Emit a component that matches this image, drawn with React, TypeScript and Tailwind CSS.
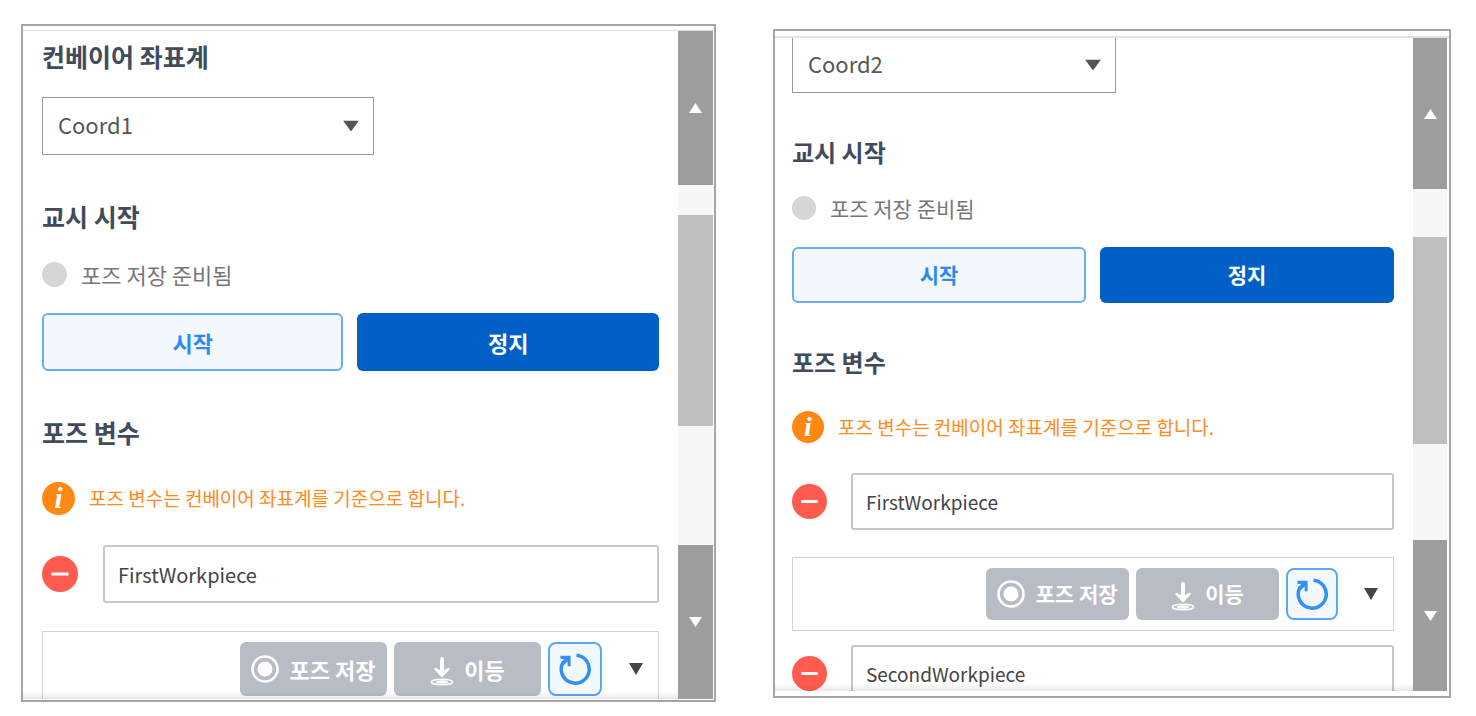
import { useState } from "react";
import type { ReactNode } from "react";

type Size = "lg" | "md";

// the two panels show the same page, at two zoom levels
const styles = {
  lg: {
    heading: "text-[25px]",
    select: "h-[58px] w-[332px] text-[22px]",
    section: "mt-[45px]",
    status: "mt-[26px] gap-[14px] text-[22px]",
    dot: "size-[25px]",
    buttons: "mt-[23px]",
    button: "h-[58px] text-[22px]",
    info: "mt-[34px] gap-[14px] text-[19px]",
    infoIcon: "size-[33px] text-[29px]",
    row: "gap-[25px]",
    remove: "size-[36px]",
    input: "h-[58px] text-[20px]",
    box: "mt-[28px]",
    action: "h-[54px] w-[147px] text-[22px]",
    reset: "size-[54px]",
    toggle: "ml-[20px]",
  },
  md: {
    heading: "text-[24px]",
    select: "h-[57px] w-[324px] text-[22px]",
    section: "mt-[43px]",
    status: "mt-[24px] gap-[14px] text-[21px]",
    dot: "size-[24px]",
    buttons: "mt-[23px]",
    button: "h-[56px] text-[21px]",
    info: "mt-[33px] gap-[14px] text-[19px]",
    infoIcon: "size-[32px] text-[28px]",
    row: "gap-[24px]",
    remove: "size-[35px]",
    input: "h-[57px] text-[19px]",
    box: "mt-[27px]",
    action: "h-[52px] w-[143px] text-[21px]",
    reset: "size-[52px]",
    toggle: "ml-[19px]",
  },
};

const Triangle = ({ up, className }: { up?: boolean; className: string }) => (
  <svg viewBox="0 0 16 12" preserveAspectRatio="none" className={className} fill="currentColor">
    <path d={up ? "M8 0L16 12H0Z" : "M0 0H16L8 12Z"} />
  </svg>
);

const Heading = ({ size, children }: { size: Size; children: ReactNode }) => (
  <h2 className={`${styles[size].heading} leading-[32px] font-bold text-[#414b5a]`}>{children}</h2>
);

const CoordSelect = ({ size, name }: { size: Size; name: string }) => {
  const [coord, setCoord] = useState<string>(name);
  return (
    <div className={`${styles[size].select} relative`}>
      <select
        aria-label="컨베이어 좌표계"
        className="size-full appearance-none border border-[#999] bg-white pb-[3px] pl-[15px] text-[#555]"
        value={coord}
        onChange={(event) => setCoord(event.target.value)}
      >
        <option>Coord1</option>
        <option>Coord2</option>
      </select>
      <Triangle className="pointer-events-none absolute top-1/2 right-[15px] h-[11px] w-[16px] -translate-y-1/2 text-[#555]" />
    </div>
  );
};

const Teaching = ({ size }: { size: Size }) => {
  const s = styles[size];
  return (
    <section className={s.section}>
      <Heading size={size}>교시 시작</Heading>
      <div className={`${s.status} flex items-center leading-[32px] text-[#777]`}>
        <span className={`${s.dot} rounded-full bg-[#d6d6d6]`} />
        포즈 저장 준비됨
      </div>
      <div className={`${s.buttons} grid grid-cols-2 gap-[14px]`}>
        <button className={`${s.button} rounded-md border-2 border-[#6cacf5] bg-[#f3f8ff] font-bold text-[#2b8af0]`}>
          시작
        </button>
        <button className={`${s.button} rounded-md bg-[#0060c6] font-bold text-white`}>정지</button>
      </div>
    </section>
  );
};

const InfoNote = ({ size }: { size: Size }) => {
  const s = styles[size];
  return (
    <div className={`${s.info} flex items-center text-[#ff8a1e]`}>
      <span
        className={`${s.infoIcon} flex items-center justify-center rounded-full bg-[#ff8812] font-['Liberation_Serif',serif] leading-none font-bold text-white italic`}
      >
        i
      </span>
      포즈 변수는 컨베이어 좌표계를 기준으로 합니다.
    </div>
  );
};

const PoseName = ({ size, name, className }: { size: Size; name: string; className: string }) => {
  const s = styles[size];
  const [value, setValue] = useState<string>(name);
  return (
    <div className={`${className} ${s.row} flex items-center`}>
      <button aria-label="삭제" className={`${s.remove} shrink-0`}>
        <svg viewBox="0 0 36 36" className="size-full">
          <circle cx="18" cy="18" r="18" fill="#ff5b4f" />
          <rect x="9.5" y="16.5" width="17" height="3" rx="0.5" fill="#fff" />
        </svg>
      </button>
      <input
        type="text"
        aria-label="포즈 변수"
        className={`${s.input} min-w-0 flex-1 rounded-[3px] border-2 border-[#c8c8c8] pl-[13px] text-[#444] outline-none`}
        value={value}
        onChange={(event) => setValue(event.target.value)}
      />
    </div>
  );
};

const PoseActions = ({ size }: { size: Size }) => {
  const s = styles[size];
  return (
    <div className={`${s.box} flex items-center justify-end gap-[7px] border border-[#d4d4d4] py-[10px] pr-[15px]`}>
      <button className={`${s.action} flex items-center justify-center gap-[10px] rounded-md bg-[#b8bcc4] font-bold text-white`}>
        <svg viewBox="0 0 28 28" className="size-[28px]">
          <circle cx="14" cy="14" r="12.5" fill="none" stroke="#fff" strokeWidth="2.6" />
          <circle cx="14" cy="14" r="7.5" fill="#fff" />
        </svg>
        포즈 저장
      </button>
      <button className={`${s.action} flex items-center justify-center gap-[10px] rounded-md bg-[#b8bcc4] font-bold text-white`}>
        <svg viewBox="0 -4 24 34" className="h-[34px] w-[24px]" fill="none" stroke="#fff">
          <ellipse cx="12" cy="26" rx="10.7" ry="2.8" strokeWidth="1.5" />
          <ellipse cx="12" cy="26" rx="6" ry="1.4" fill="#fff" strokeWidth="0.6" />
          <path d="M12 3V17" strokeWidth="4" strokeLinecap="round" />
          <path d="M5.5 13L12 20L18.5 13L12 16.5Z" fill="#fff" strokeWidth="2.4" strokeLinejoin="round" />
        </svg>
        이등
      </button>
      <button
        aria-label="초기화"
        className={`${s.reset} flex items-center justify-center rounded-lg border-2 border-[#5ea6f6] bg-[#f3f8ff]`}
      >
        <svg viewBox="0 0 34 34" className="size-[34px]" fill="none" stroke="#3490f2">
          <path d="M18.5 3.2A14 14 0 1 1 5.6 9.4" strokeWidth="3.6" />
          <path d="M2.4 3.8H12.6V14.2H9.6V9.6L6.4 12.4L3.8 10.2L6 7.2L2.4 6.8Z" fill="#3490f2" stroke="none" />
        </svg>
      </button>
      <button aria-label="펼치기" className={s.toggle}>
        <Triangle className="h-[12px] w-[14px] text-[#444]" />
      </button>
    </div>
  );
};

const ScrollBar = ({ width, arrow, before, thumb }: { width: string; arrow: string; before: string; thumb: string }) => (
  <div className={`${width} flex shrink-0 flex-col bg-[#f7f7f7]`}>
    <button aria-label="위로" className={`${arrow} flex shrink-0 items-center justify-center bg-[#9d9d9d]`}>
      <Triangle up className="h-[10px] w-[13px] text-white" />
    </button>
    <div className={`${before} shrink-0`} />
    <div className={`${thumb} shrink-0 bg-[#bfbfbf]`} />
    <button aria-label="아래로" className={`${arrow} mt-auto flex shrink-0 items-center justify-center bg-[#9d9d9d]`}>
      <Triangle className="h-[10px] w-[13px] text-white" />
    </button>
  </div>
);

const Fade = () => (
  <div className="pointer-events-none absolute inset-x-0 bottom-0 h-[7px] bg-linear-to-b from-transparent to-black/10" />
);

export default function App() {
  return (
    <main className="flex items-start gap-[57px] bg-white pt-[24px] pr-[25px] pl-[21px] font-['Noto_Sans_CJK_KR',sans-serif]">
      <div className="flex h-[678px] min-w-0 flex-[695] flex-col border-2 border-[#a6a6a6] pb-px">
        <div className="h-[5px] shrink-0 border-b border-[#ddd]" />
        <div className="flex min-h-0 flex-1 pr-px">
          <div className="relative min-w-0 flex-1 overflow-hidden px-[19px] pt-[9px]">
            <Heading size="lg">컨베이어 좌표계</Heading>
            <div className="mt-[25px]">
              <CoordSelect size="lg" name="Coord1" />
            </div>
            <Teaching size="lg" />
            <section className={styles.lg.section}>
              <Heading size="lg">포즈 변수</Heading>
              <InfoNote size="lg" />
              <PoseName size="lg" name="FirstWorkpiece" className="mt-[30px]" />
              <PoseActions size="lg" />
            </section>
            <Fade />
          </div>
          <ScrollBar width="w-[35px]" arrow="h-[154px]" before="h-[30px]" thumb="h-[211px]" />
        </div>
      </div>

      <div className="mt-[5px] flex h-[669px] min-w-0 flex-[678] flex-col border-2 border-[#a6a6a6] pb-[5px]">
        <div className="h-[7px] shrink-0 border-b-2 border-[#e2e2e2]" />
        <div className="flex min-h-0 flex-1 pr-[2px]">
          <div className="relative min-w-0 flex-1 overflow-hidden pr-[19px] pl-[17px]">
            {/* scrolled, the top edge of the select is cut */}
            <div className="-mt-[2px]">
              <CoordSelect size="md" name="Coord2" />
            </div>
            <Teaching size="md" />
            <section className={styles.md.section}>
              <Heading size="md">포즈 변수</Heading>
              <InfoNote size="md" />
              <PoseName size="md" name="FirstWorkpiece" className="mt-[30px]" />
              <PoseActions size="md" />
              <PoseName size="md" name="SecondWorkpiece" className="mt-[14px]" />
            </section>
            <Fade />
          </div>
          <ScrollBar width="w-[34px]" arrow="h-[151px]" before="h-[48px]" thumb="h-[207px]" />
        </div>
      </div>
    </main>
  );
}
